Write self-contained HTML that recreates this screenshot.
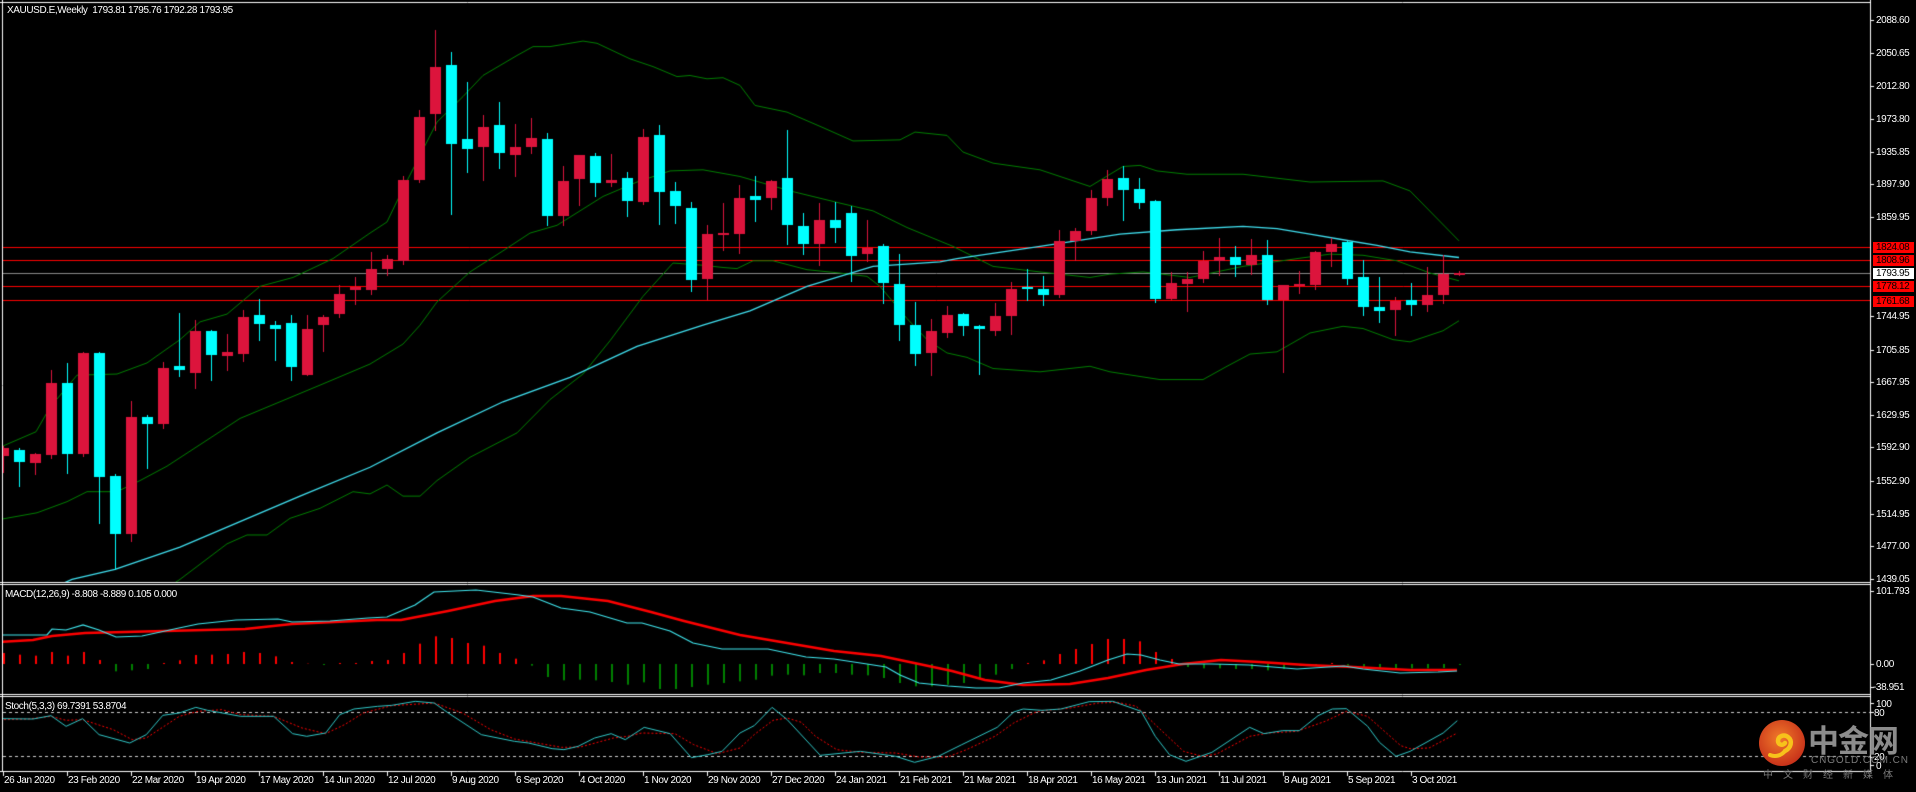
<!DOCTYPE html>
<html><head><meta charset="utf-8"><style>
html,body{margin:0;padding:0;background:#000;width:1916px;height:792px;overflow:hidden;}
#c{position:absolute;left:0;top:0;}
.t{position:absolute;color:#fff;font-family:"Liberation Sans",sans-serif;font-size:10px;letter-spacing:-0.4px;white-space:nowrap;line-height:11px;}
.bx{position:absolute;left:1873px;width:41px;height:11px;background:#ff0000;color:#000;font-family:"Liberation Sans",sans-serif;font-size:10px;letter-spacing:-0.4px;line-height:11px;padding-left:3px;box-sizing:border-box;}
</style></head><body>
<canvas id="c" width="1916" height="792"></canvas>
<div class="t" style="left:7px;top:5px">XAUUSD.E,Weekly&nbsp; 1793.81 1795.76 1792.28 1793.95</div>
<div class="t" style="left:5px;top:589px">MACD(12,26,9) -8.808 -8.889 0.105 0.000</div>
<div class="t" style="left:5px;top:701px">Stoch(5,3,3) 69.7391 53.8704</div>
<div id="ax"></div>
<div class="bx" style="top:242px">1824.08</div>
<div class="bx" style="top:255px">1808.96</div>
<div class="bx" style="top:268px;background:#fff">1793.95</div>
<div class="bx" style="top:281px">1778.12</div>
<div class="bx" style="top:296px">1761.68</div>
<div class="t" style="left:1876px;top:586px">101.793</div>
<div class="t" style="left:1876px;top:659px">0.00</div>
<div class="t" style="left:1873px;top:682px">-38.951</div>
<div class="t" style="left:1876px;top:699px">100</div>
<div class="t" style="left:1874px;top:708px">80</div>
<div class="t" style="left:1874px;top:752px">20</div>
<div class="t" style="left:1876px;top:761px">0</div>
<div id="dates"></div>
<svg style="position:absolute;left:1758px;top:719px" width="48" height="48" viewBox="0 0 48 48">
<defs><radialGradient id="g" cx="45%" cy="40%" r="60%"><stop offset="0" stop-color="#f07a2a"/><stop offset="1" stop-color="#c8321a"/></radialGradient></defs>
<circle cx="24" cy="24" r="23" fill="url(#g)"/>
<path d="M27 32c6-3 8-10 3-14c-4-3-10-1-10 4c0 4 5 5 7 2" fill="none" stroke="#f7c21b" stroke-width="4.5" stroke-linecap="round"/>
<path d="M12 36c5 2 11 1 15-4" fill="none" stroke="#f7c21b" stroke-width="4" stroke-linecap="round"/>
</svg>
<div style="position:absolute;left:1808px;top:721px;font-family:'Noto Sans CJK SC',sans-serif;font-weight:bold;font-size:31px;color:#8c8c8c;line-height:36px;letter-spacing:-1px">中金网</div>
<div style="position:absolute;left:1811px;top:755px;font-family:'Liberation Sans',sans-serif;font-size:10px;color:#7a7a7a;letter-spacing:0.9px;line-height:11px">CNGOLD.COM.CN</div>
<div style="position:absolute;left:1763px;top:768px;font-family:'Noto Sans CJK SC',sans-serif;font-size:10px;color:#7a7a7a;letter-spacing:10px;line-height:12px">中文财经新媒体</div>
<script>
var c=document.getElementById('c').getContext('2d');
var K=1.1099;
function py(p){return 579-(p-1439.05)*0.86;}
// axis labels
var labs=["2088.60","2050.65","2012.80","1973.80","1935.85","1897.90","1859.95","1744.95","1705.85","1667.95","1629.95","1592.90","1552.90","1514.95","1477.00","1439.05"];
var ax=document.getElementById('ax'),h='';
labs.forEach(function(l){var y=py(parseFloat(l));h+='<div class="t" style="left:1876px;top:'+(y-5)+'px">'+l+'</div>';});
ax.innerHTML=h;
var dl=["26 Jan 2020","23 Feb 2020","22 Mar 2020","19 Apr 2020","17 May 2020","14 Jun 2020","12 Jul 2020","9 Aug 2020","6 Sep 2020","4 Oct 2020","1 Nov 2020","29 Nov 2020","27 Dec 2020","24 Jan 2021","21 Feb 2021","21 Mar 2021","18 Apr 2021","16 May 2021","13 Jun 2021","11 Jul 2021","8 Aug 2021","5 Sep 2021","3 Oct 2021"];
h='';dl.forEach(function(d,k){var x=Math.round(3.3+64*k);h+='<div class="t" style="left:'+(x+1)+'px;top:775px">'+d+'</div>';});
document.getElementById('dates').innerHTML=h;
// frame
c.fillStyle='#000';c.fillRect(0,0,1916,792);
c.strokeStyle='#fff';c.lineWidth=1;
function L(x1,y1,x2,y2){c.beginPath();c.moveTo(x1,y1);c.lineTo(x2,y2);c.stroke();}
L(0,2.5,1870,2.5);L(2.5,0,2.5,771);L(1870.5,0,1870.5,772);
L(0,582.5,1870,582.5);L(0,584.5,1870,584.5);L(0,694.5,1870,694.5);L(0,696.5,1870,696.5);L(0,771.5,1870,771.5);
// ticks on axis
labs.forEach(function(l){var y=Math.round(py(parseFloat(l)))+0.5;L(1870,y,1874,y);});
[591,664,687,703,712,757,765].forEach(function(y){L(1870,y+0.5,1874,y+0.5);});
for(var k=0;k<23;k++){var x=Math.round(3.3+64*k)+0.5;L(x,772,x,776);}
// main clip
c.save();c.beginPath();c.rect(3,3,1867,579);c.clip();
// horizontal lines
c.strokeStyle='#ff0000';[247,260,286,300].forEach(function(y){L(3,y+0.5,1870,y+0.5);});
c.strokeStyle='#8a8a8a';L(3,273.5,1870,273.5);
function poly(pts,col,w,kk){c.strokeStyle=col;c.lineWidth=w;c.beginPath();for(var i=0;i<pts.length;i+=2){var x=pts[i],y=pts[i+1]*kk;if(i==0)c.moveTo(x,y);else c.lineTo(x,y);}c.stroke();c.lineWidth=1;}
var up=[0,403,36,389,50,367,77,338,117,337,147,327,180,306,200,290,227,283,260,258,293,250,333,233,370,210,387,200,403,170,437,110,463,87,483,68,517,50,533,42,550,42,583,37,597,39,630,53,653,60,677,69,690,68,707,71,723,70,740,77,755,95,787,101,823,115,853,127,900,126,915,119,947,122,963,137,993,147,1040,153,1090,168,1110,157,1123,150,1140,149,1157,154,1187,157,1243,157,1310,164,1383,163,1410,172,1459,217];
var mid=[0,468,37,462,67,452,87,443,117,443,140,433,167,420,213,393,240,377,280,362,320,347,370,328,403,310,420,293,437,272,470,245,503,226,530,210,557,203,603,177,637,164,670,154,703,153,740,159,790,172,840,183,873,190,907,205,953,222,993,240,1040,245,1090,250,1110,247,1143,245,1190,250,1243,240,1297,233,1330,229,1363,230,1397,235,1430,246,1459,253];
var lo=[150,540,180,522,227,490,247,482,267,482,290,467,320,458,353,443,370,445,387,437,403,447,420,447,437,433,470,412,517,390,550,360,583,337,610,307,643,267,673,237,703,239,723,241,737,242,753,235,773,235,807,243,840,246,867,249,880,258,907,287,927,306,947,318,967,322,993,332,1040,335,1090,330,1110,335,1160,342,1203,342,1227,330,1250,319,1277,317,1310,300,1343,294,1363,296,1393,306,1410,308,1443,298,1459,289];
var ma=[40,535,72,522,115,513,180,493,240,470,300,447,370,421,437,390,503,362,570,340,637,312,703,293,750,280,807,258,873,240,940,236,957,233,1040,222,1120,211,1177,207,1243,204,1277,206,1310,211,1343,216,1377,221,1410,227,1459,232];
poly(up,'#008000',1,K);poly(mid,'#008000',1,K);poly(lo,'#008000',1,K);poly(ma,'#40e0f0',1.3,K);
var cd=[[404,411,402,425,1],[405,416,404,438,0],[409,417,408,427,1],[345,410,333,413,1],[345,409,327,426,0],[318,409,317,411,1],[318,430,317,471,0],[429,481,427,513,0],[376,481,361,487,1],[376,382,374,422,0],[332,382,326,386,1],[330,333,282,339,0],[298,336,288,350,1],[298,320,297,342,0],[317,321,301,333,1],[286,319,279,325,1],[284,292,269,306,0],[293,296,289,324,0],[291,331,284,342,0],[296,338,284,338,1],[286,293,284,316,1],[265,283,257,286,1],[259,261,250,274,1],[242,261,227,265,1],
[233,242,230,248,1],[162,235,159,238,1],[105,162,99,164,1],[60,103,27,117,1],[59,130,47,193,0],[125,134,74,155,0],[114,132,104,162,1],[113,138,92,151,0],[132,140,112,159,1],[124,132,106,138,1],[125,195,120,203,0],[163,195,150,203,1],[140,161,140,185,1],[141,165,138,177,0],[162,165,139,168,1],[160,181,155,195,0],[123,182,116,184,1],[122,173,113,202,0],[172,186,164,201,0],[187,252,182,262,0],[211,251,203,269,1],[210,211,183,225,1],[178,211,167,228,1],
[177,180,159,199,0],[163,178,162,188,1],[160,203,117,220,0],[204,220,192,229,0],[198,220,183,239,1],[198,205,182,218,0],[192,231,186,253,0],[223,229,198,235,1],[222,255,220,273,0],[256,293,229,306,0],[293,319,272,329,0],[298,318,287,338,1],[284,300,276,304,1],[283,294,282,302,0],[294,296,293,337,0],[285,298,273,302,1],[260,285,254,301,1],[259,260,242,270,0],[260,266,249,275,0],[217,266,207,268,1],[208,217,205,234,1],[178,208,171,211,1],[161,178,153,185,1],
[160,171,150,198,0],[170,183,160,187,0],[181,269,180,272,0],[255,269,245,269,1],[251,256,245,280,1],[235,251,226,254,1],[232,235,214,248,1],[232,239,222,249,0],[230,239,215,247,1],[230,270,216,274,0],[257,270,257,335,1],[256,258,244,264,1],[227,257,226,260,1],[220,227,214,240,1],[218,251,217,256,0],[250,277,234,284,0],[277,280,250,290,0],[271,279,268,302,1],[270,275,255,284,0],[266,275,241,280,1],[247,266,230,273,1],[246,247,244,248,1]];
cd.forEach(function(d,i){var cx=Math.round(3.3+16*i);var col=d[4]?'#dc143c':'#00ffff';c.fillStyle=col;
var t=Math.round(d[0]*K),b=Math.round(d[1]*K),hh=Math.round(d[2]*K),ll=Math.round(d[3]*K);
c.fillRect(cx,hh,1,ll-hh+1);c.fillRect(cx-5,t,11,Math.max(2,b-t));});
c.restore();
// MACD
c.save();c.beginPath();c.rect(3,585,1867,109);c.clip();
var hg=[210,215,218,207,218,207,231,265,262,258,240,232,216,215,213,207,210,220,237,242,245,240,240,234,231,210,182,160,165,180,188,210,227,248,282,292,290,292,297,305,298,318,318,312,305,300,295,290,278,275,277,270,270,275,277,285,300,310,310,305,300,285,275,258,240,232,213,198,183,168,168,175,207,228,252,256,256,258,258,262,258,248,243,240,248,255,255,256,256,256,255,243];
hg.forEach(function(v,i){var cx=Math.round(3.3+16*i);var y=583+v/3;var red=v<243;c.fillStyle=red?'#ff0000':'#008000';if(red)c.fillRect(cx,y,2,664-y);else c.fillRect(cx,664,2,Math.max(1,y-664));});
function seg(pts,col,w,dash){c.strokeStyle=col;c.lineWidth=w;c.setLineDash(dash||[]);c.beginPath();for(var i=0;i<pts.length;i+=2){if(i==0)c.moveTo(pts[i],pts[i+1]);else c.lineTo(pts[i],pts[i+1]);}c.stroke();c.setLineDash([]);c.lineWidth=1;}
seg([0,642,33,640,52,636,85,633,165,631,245,629,292,624,377,620,401,620,448,611,495,601,533,596,561,596,608,601,651,612,684,621,740,635,787,643,834,651,881,656,919,664,952,671,985,680,1023,685,1070,684,1108,678,1146,670,1183,664,1221,660,1259,662,1306,665,1353,667,1410,670,1457,670],'#ff0000',2.5);
seg([0,635,47,635,52,629,66,630,83,625,99,630,116,637,142,636,179,628,198,624,236,620,278,619,292,622,330,621,368,618,387,617,415,605,434,592,476,590,519,595,533,597,561,608,590,612,627,623,642,623,670,631,693,643,722,649,740,649,768,649,806,657,834,659,867,664,886,667,900,675,919,683,948,686,976,688,999,688,1023,683,1051,680,1080,671,1108,660,1127,654,1141,655,1160,660,1179,664,1212,664,1249,665,1297,669,1344,666,1363,669,1400,673,1438,672,1457,671],'#40e8f0',1.2);
c.restore();
// Stoch
c.save();c.beginPath();c.rect(3,697,1867,74);c.clip();
seg([3,712.5,1870,712.5],'#ccc',1,[3,3]);seg([3,756.5,1870,756.5],'#ccc',1,[3,3]);
function cv(a,off){var r=[];for(var i=0;i<a.length;i+=2){r.push(a[i]/2.119+off,a[i+1]/3+583);}return r;}
var sm=cv([0,407,70,408,108,398,140,430,175,407,210,455,275,480,310,455,345,397,380,390,415,373,440,382,510,400,580,400,620,452,650,460,690,450,720,395,750,378,800,370,830,367,880,355,920,360,950,390,1020,455,1090,475,1120,480,1170,497,1195,500,1225,490,1260,465,1295,452,1325,470,1365,433,1420,452,1465,524,1500,515,1530,505,1568,450],0).concat(cv([30,428,68,373,100,410,170,517,255,505,330,520,370,538,420,520,470,485,545,433,580,387,600,378,640,382,680,378,740,356,790,355,850,385,880,460,910,515,945,535,1000,508,1080,433,1110,452,1150,443,1185,443,1225,398,1255,378,1285,377,1330,430,1355,478,1390,520,1420,505,1490,450,1520,413],740));
var ss=cv([0,410,60,408,108,400,140,412,175,410,240,440,280,470,310,465,380,400,420,385,470,380,510,395,580,400,640,435,690,452,730,425,770,390,830,368,920,360,980,390,1040,440,1090,468,1190,493,1230,492,1300,465,1330,460,1360,450,1430,452,1470,485,1520,512,1568,495],0).concat(cv([30,455,70,412,100,405,130,418,160,460,205,500,255,508,330,510,380,522,440,522,480,500,540,460,580,420,630,385,700,375,760,360,800,358,840,370,880,425,940,505,980,520,1010,513,1080,460,1120,450,1180,445,1240,415,1285,385,1330,400,1400,488,1420,497,1460,495,1520,450],740));
seg(ss,'#ff0000',1,[2,2]);seg(sm,'#30c8c8',1);
c.restore();
</script>
</body></html>
